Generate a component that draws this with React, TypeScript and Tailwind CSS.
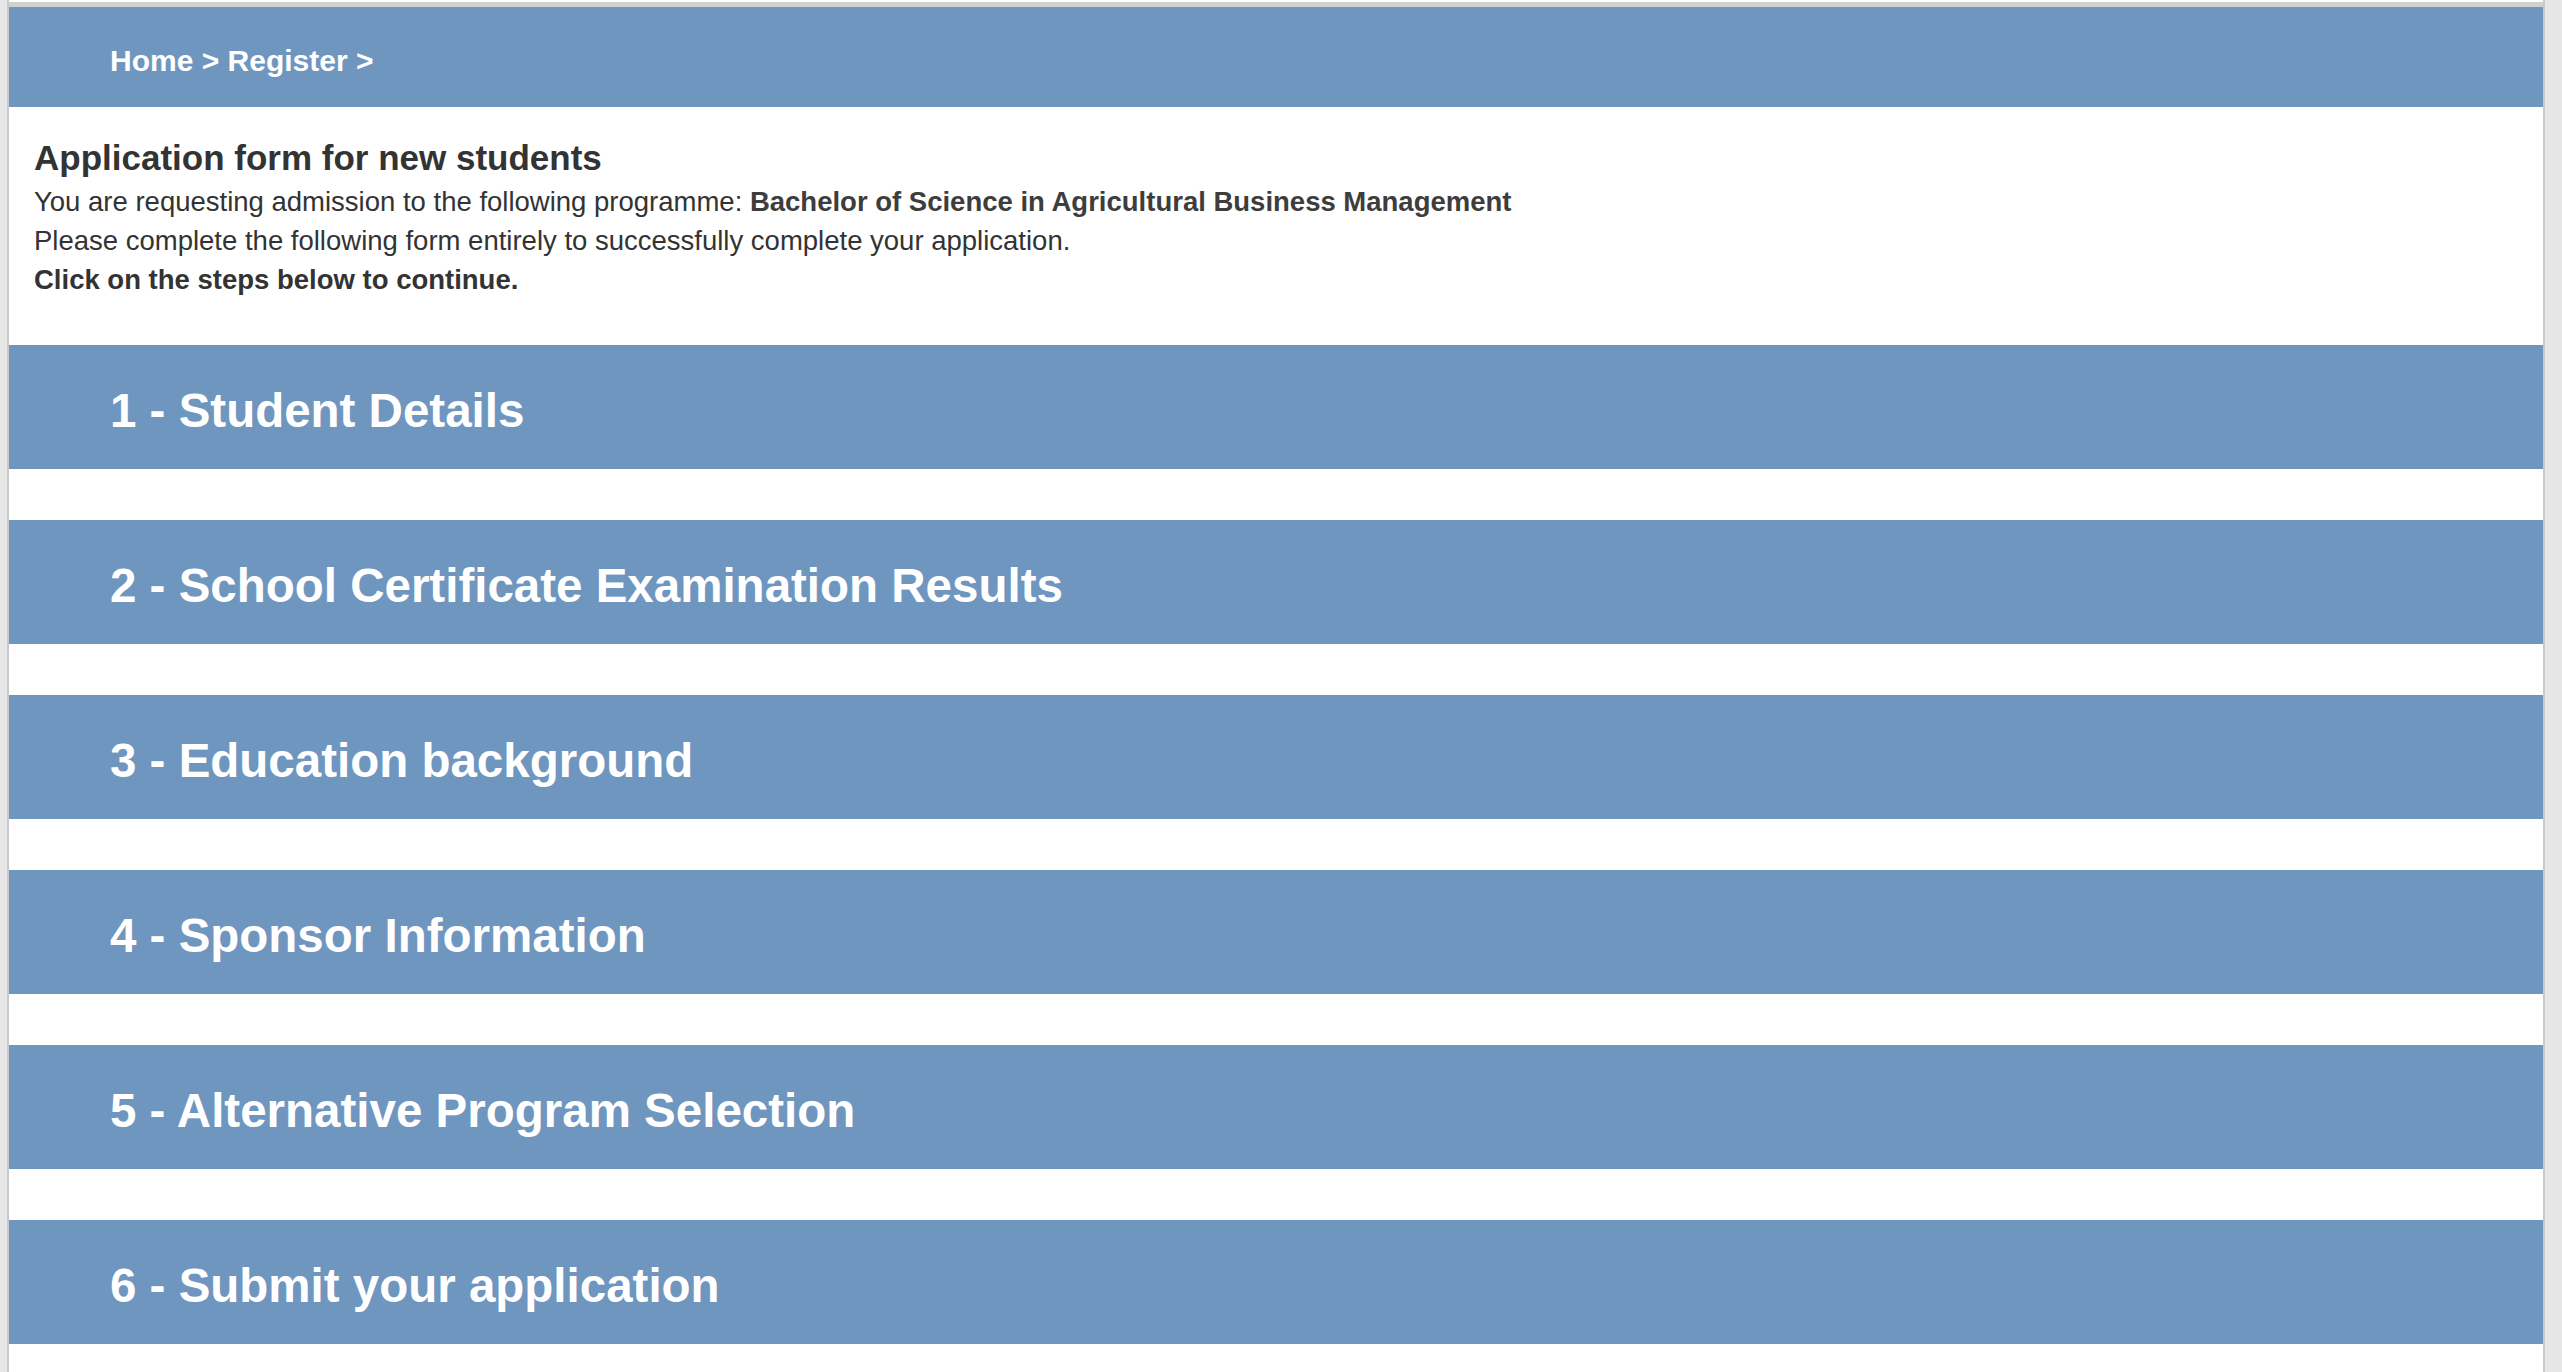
const steps = [
  "1 - Student Details",
  "2 - School Certificate Examination Results",
  "3 - Education background",
  "4 - Sponsor Information",
  "5 - Alternative Program Selection",
  "6 - Submit your application",
]

export default function App() {
  return (
    <div className="min-h-[1372px] bg-[#e6e6e6] font-['Liberation_Sans',Arial,sans-serif]">
      <div className="ml-[7px] w-[2538px] min-h-[1372px] border-x-2 border-[#c9c9c9] bg-white pt-[2px]">
        <div className="h-[5px] bg-[#d0d0d0]" />

        <div className="flex h-[100px] items-center bg-[#6f96bf] pl-[101px] pt-[7px]">
          <span className="text-[30px] font-bold text-white">Home &gt; Register &gt;</span>
        </div>

        <div className="px-[25px] pt-[32px] text-[#333]">
          <h4 className="text-[35px] font-bold leading-[1.1]">Application form for new students</h4>
          <div className="mt-[4px] text-[27.5px] leading-[1.42857]">
            <p>
              You are requesting admission to the following programme:{" "}
              <b className="text-[#3d3d3d]">Bachelor of Science in Agricultural Business Management</b>
            </p>
            <p>Please complete the following form entirely to successfully complete your application.</p>
            <p className="font-bold">Click on the steps below to continue.</p>
          </div>
        </div>

        <div className="mt-[46px] flex flex-col gap-[51px]">
          {steps.map((s) => (
            <div
              key={s}
              className="flex h-[124px] cursor-pointer items-center bg-[#6f96bf] pl-[101px] pt-[6px]"
            >
              <span className="text-[47.5px] font-bold text-white">{s}</span>
            </div>
          ))}
        </div>
      </div>
    </div>
  )
}
